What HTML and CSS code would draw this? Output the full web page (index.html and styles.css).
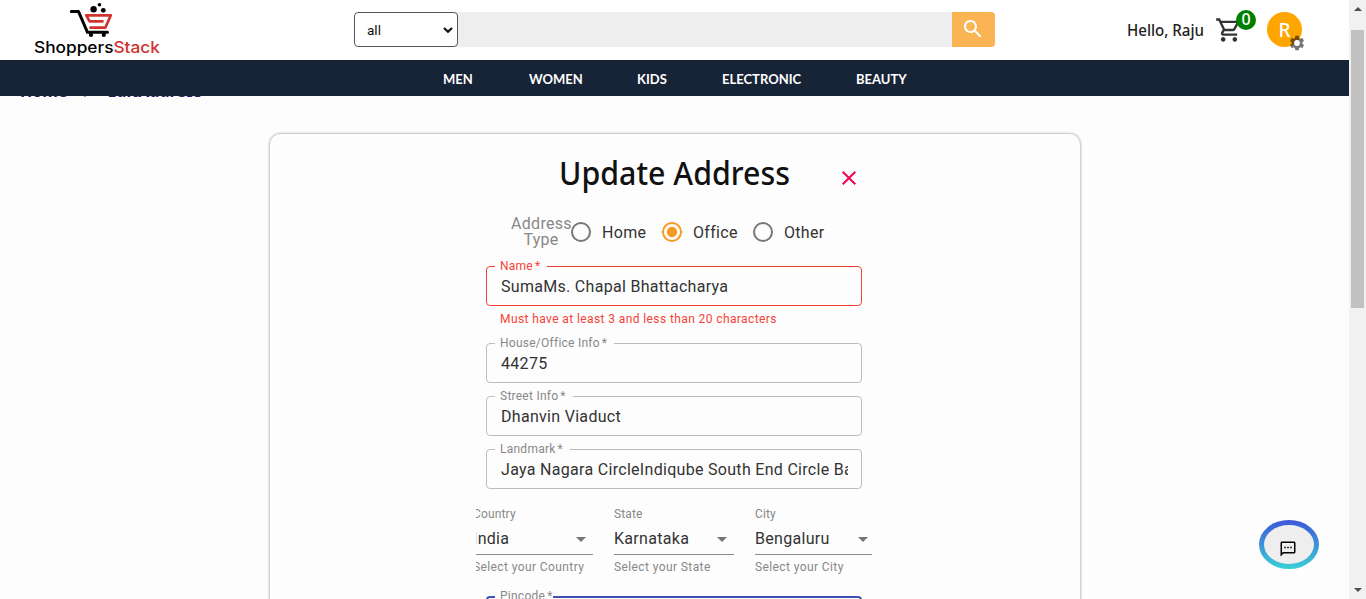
FILE: index.html
```html
<!DOCTYPE html>
<html lang="en">
<head>
<meta charset="utf-8">
<title>ShoppersStack</title>
<link rel="stylesheet" href="styles.css">
</head>
<body>
<div class="window">
  <div class="page">
    <header class="header">
      <svg class="logo" width="140" height="60" viewBox="0 0 140 60">
        <g fill="none" stroke="#000" stroke-width="3" stroke-linecap="round" stroke-linejoin="round">
          <path d="M47.300 11.500H54.500L63.500 32.300H83.500"/>
        </g>
        <g fill="none" stroke="#cf3430" stroke-width="2.700" stroke-linejoin="round" stroke-linecap="round">
          <path d="M78 21.300H65.600L62.300 15.300H86.800L81.300 27.700H66.500M67 21.300H78.500"/>
        </g>
        <circle cx="69.600" cy="9.300" r="3.200"/><circle cx="75.500" cy="4.800" r="1.800"/><circle cx="79.300" cy="10.300" r="2.400"/>
        <circle cx="67" cy="34.900" r="2.100"/><circle cx="79.800" cy="34.900" r="2.100"/>
        <text class="logo-text" x="10" y="52.500" textLength="126" lengthAdjust="spacingAndGlyphs">Shoppers<tspan fill="#cf3430">Stack</tspan></text>
      </svg>
      <div class="search">
        <div class="category">all
          <svg width="12" height="8" viewBox="0 0 12 8"><path d="M2 2L6 5.800L10 2" fill="none" stroke="#111" stroke-width="2.200"/></svg>
        </div>
        <div class="query"></div>
        <div class="search-button">
          <svg width="24" height="24" viewBox="0 0 24 24" fill="#fff"><path d="M15.500 14h-.79l-.28-.27C15.410 12.590 16 11.110 16 9.500 16 5.910 13.090 3 9.500 3S3 5.910 3 9.500 5.910 16 9.500 16c1.610 0 3.090-.59 4.230-1.570l.27.28v.79l5 4.990L20.490 19l-4.990-5zm-6 0C7.010 14 5 11.990 5 9.500S7.010 5 9.500 5 14 7.010 14 9.500 11.990 14 9.500 14z"/></svg>
        </div>
      </div>
      <div class="account">
        <svg class="hello" width="79" height="24"><text x="1" y="17" textLength="77" lengthAdjust="spacingAndGlyphs">Hello, Raju</text></svg>
        <div class="cart">
          <svg width="28" height="28" viewBox="0 0 24 24" fill="#333"><path d="M15.550 13c.75 0 1.410-.41 1.750-1.030l3.580-6.490c.37-.66-.11-1.480-.87-1.480H5.210l-.94-2H1v2h2l3.600 7.590-1.350 2.440C4.520 15.370 5.480 17 7 17h12v-2H7l1.100-2h7.450zM6.160 6h12.150l-2.760 5H8.530L6.160 6zM7 18c-1.100 0-1.990.9-1.990 2S5.900 22 7 22s2-.9 2-2-.9-2-2-2zm10 0c-1.100 0-1.990.9-1.990 2s.89 2 1.990 2 2-.9 2-2-.9-2-2-2z"/></svg>
          <span class="count">0</span>
        </div>
        <div class="avatar">R
          <svg class="gear" width="18" height="18" viewBox="0 0 24 24"><path d="M19.140 12.940c.04-.3.060-.61.060-.94 0-.32-.02-.64-.07-.94l2.030-1.580c.18-.14.23-.41.120-.61l-1.920-3.320c-.12-.22-.37-.29-.59-.22l-2.390.96c-.5-.38-1.030-.7-1.620-.94l-.36-2.540c-.04-.24-.24-.41-.48-.41h-3.840c-.24 0-.43.170-.47.410l-.36 2.540c-.59.240-1.130.570-1.620.940l-2.390-.96c-.22-.08-.47 0-.59.220L2.740 8.870c-.12.210-.08.470.120.610l2.030 1.580c-.05.300-.09.630-.09.940s.02.640.07.940l-2.030 1.580c-.18.140-.23.410-.12.610l1.920 3.320c.12.220.37.290.59.220l2.390-.96c.5.380 1.030.7 1.620.94l.36 2.540c.05.240.24.410.48.410h3.840c.24 0 .44-.17.47-.41l.36-2.540c.59-.24 1.130-.56 1.620-.94l2.390.96c.22.080.47 0 .59-.22l1.920-3.320c.12-.22.070-.47-.12-.61l-2.010-1.580z" /><circle cx="12" cy="12" r="3.900" /></svg>
        </div>
      </div>
    </header>
    <nav class="nav"><a>MEN</a><a>WOMEN</a><a>KIDS</a><a>ELECTRONIC</a><a>BEAUTY</a></nav>
    <main class="main">
      <div class="crumbs"><span>Home</span><i>/</i><span>EditAddress</span></div>
      <section class="card">
        <div class="heading">
          <svg class="title" width="236" height="48"><text x="1" y="35" textLength="231" lengthAdjust="spacingAndGlyphs">Update Address</text></svg>
          <svg class="close" width="24" height="24" viewBox="0 0 24 24"><path d="M19 6.410L17.590 5 12 10.590 6.410 5 5 6.410 10.590 12 5 17.590 6.410 19 12 13.410 17.590 19 19 17.590 13.410 12z" fill="#f50057"/></svg>
        </div>
        <div class="types">
          <span class="type-label">Address<br>Type</span>
          <span class="radio"><i class="dot"></i>Home</span>
          <span class="radio"><i class="dot on"></i>Office</span>
          <span class="radio"><i class="dot"></i>Other</span>
        </div>
        <div class="fields">
          <div class="field error"><label>Name<b>*</b></label><p>SumaMs. Chapal Bhattacharya</p></div>
          <div class="message">Must have at least 3 and less than 20 characters</div>
          <div class="field"><label>House/Office Info<b>*</b></label><p>44275</p></div>
          <div class="field"><label>Street Info<b>*</b></label><p>Dhanvin Viaduct</p></div>
          <div class="field"><label>Landmark<b>*</b></label><p>Jaya Nagara CircleIndiqube South End Circle Banashankari</p></div>
        </div>
        <div class="selects">
          <div class="select"><small>Country</small><div class="value">India<i></i></div><small class="hint">Select your Country</small></div>
          <div class="select"><small>State</small><div class="value">Karnataka<i></i></div><small class="hint">Select your State</small></div>
          <div class="select"><small>City</small><div class="value">Bengaluru<i></i></div><small class="hint">Select your City</small></div>
        </div>
        <div class="fields">
          <div class="field focused"><label>Pincode<b>*</b></label></div>
        </div>
      </section>
    </main>
    <div class="chat">
      <svg width="18" height="18" viewBox="0 0 24 24"><path d="M20 2H4c-1.100 0-2 .9-2 2v18l4-4h14c1.100 0 2-.9 2-2V4c0-1.100-.9-2-2-2zm0 14H5.200L4 17.200V4h16v12zM7 9h2v2H7zm4 0h2v2h-2zm4 0h2v2h-2z"/></svg>
    </div>
  </div>
  <div class="scrollbar"><i class="up"></i><div class="thumb"></div><i class="down"></i></div>
</div>
</body>
</html>
```
FILE: styles.css
```css
* { box-sizing: border-box; }
body { margin: 0; font-family: Roboto, sans-serif; }
.window { display: flex; width: 1366px; height: 599px; overflow: hidden; }
.page { width: 1349px; height: 599px; overflow: hidden; position: relative; background: #fdfdfd; }

.header { display: flex; height: 60px; background: #fff; position: relative; z-index: 2; }
.logo { margin-left: 24px; flex: none; }
.logo-text { font: 500 16px "Inter", sans-serif; }
.search { display: flex; width: 641px; height: 35px; margin: 12px 0 0 190px; flex: none; border-radius: 4px; background: #eee; overflow: hidden; }
.category { display: flex; align-items: center; justify-content: space-between; width: 104px; padding: 0 3px 0 12px; border: 1px solid #555; border-radius: 4px; background: #fff; font-size: 13.5px; color: #111; }
.query { flex: 1; }
.search-button { width: 43px; padding: 5px 0 0 9px; background: #fbb454; }
.account { display: flex; margin-left: 131px; }
.hello { margin-top: 19px; font: 500 16px "Noto Sans", sans-serif; fill: #222; }
.cart { position: relative; margin: 16px 0 0 10px; width: 28px; height: 28px; }
.count { position: absolute; left: 21px; top: -6px; width: 20px; height: 20px; border-radius: 50%; background: #008000; color: #fff; font: 500 16px/18px "Noto Sans", sans-serif; text-align: center; }
.avatar { position: relative; width: 35px; height: 35px; margin: 12px 0 0 24px; border-radius: 50%; background: #ffa500; color: #fff; font: 500 19px/36px "Noto Sans", sans-serif; text-align: center; }
.gear { position: absolute; left: 21px; top: 22px; }
.gear path { fill: #000; opacity: .54; }
.gear circle { fill: #fff; }

.nav { display: flex; height: 36px; padding: 1px 0 0 443px; gap: 57px; align-items: center; background: #172337; position: relative; z-index: 2; color: #fff; font: 700 13px "Lato", sans-serif; }
.nav a:nth-child(1) { width: 29px; }
.nav a:nth-child(2) { width: 51px; }
.nav a:nth-child(3) { width: 28px; }
.nav a:nth-child(4) { width: 77px; }

.main { margin-top: -17px; }
.crumbs { display: flex; height: 55px; padding: 1px 0 0 20px; color: #2a1463; font: 700 16px/22px "Noto Sans", sans-serif; }
.crumbs i { width: 40px; text-align: center; font-weight: 400; color: #777; }
.card { width: 810px; height: 600px; margin: 0 0 0 270px; border-radius: 10px; background: #fdfdfd; box-shadow: 0 0 3px rgba(0, 0, 0, .5); }
.heading { display: flex; height: 76px; padding: 16px 0 0 288px; }
.title { font: 500 32px "Noto Sans", sans-serif; fill: #111; }
.close { margin: 16px 0 0 43px; }

.types { display: flex; height: 56px; padding-left: 241px; color: #333; font-size: 16px; letter-spacing: .15px; }
.type-label { width: 60px; padding-top: 6px; line-height: 16px; color: #888; text-align: center; letter-spacing: .3px; }
.radio { display: flex; height: 44px; width: 91px; align-items: center; letter-spacing: .3px; }
.dot { width: 20px; height: 20px; margin-right: 11px; border: 2px solid #777; border-radius: 50%; }
.dot.on { border-color: #f8971d; background: radial-gradient(circle, #f8971d 4.700px, transparent 5.500px); }

.fields { width: 376px; margin-left: 216px; }
.field { position: relative; height: 40px; margin-bottom: 13px; padding: 0 13px 0 14px; border: 1px solid #bdbdbd; border-radius: 4px; }
.field p { margin: 0; line-height: 39px; font-size: 16px; letter-spacing: .3px; color: #333; overflow: hidden; white-space: nowrap; }
.field label { position: absolute; left: 8px; top: -8px; padding: 0 7px 0 5px; background: #fdfdfd; color: #888; font-size: 12px; line-height: 14px; letter-spacing: .25px; }
.field b { font-weight: 400; margin-left: 2px; }
.error { border-color: #f44336; margin-bottom: 6px; }
.error label, .message { color: #f44336; }
.message { height: 31px; padding-left: 14px; line-height: 14px; font-size: 12px; letter-spacing: .4px; }
.focused { border: 2px solid #3f51b5; }
.focused label { padding-right: 0; left: 7px; top: -9px; }

.selects { display: grid; grid-template-columns: 120px 120px 117px; column-gap: 21px; width: 396px; height: 94px; padding-top: 5px; margin-left: 206px; overflow: hidden; }
.select { margin-left: -3px; margin-right: 3px; width: 120px; color: #888; }
.select:nth-child(n+2) { margin-left: -3px; }
.select small { display: block; font-size: 12px; line-height: 14px; letter-spacing: .15px; }
.select .hint { margin-top: 5px; letter-spacing: .4px; }
.value { display: flex; align-items: center; justify-content: space-between; height: 34px; padding: 1px 7px 0 0; border-bottom: 1px solid #8c8c8c; color: #333; font-size: 16px; letter-spacing: .3px; }
.value i { border: 5px solid transparent; border-top-color: #757575; border-bottom: 0; margin-top: 2px; }

.chat { position: absolute; left: 1259px; top: 520px; width: 60px; height: 49px; padding: 15px 0 0 15px; border: 5px solid transparent; border-radius: 50%; background: linear-gradient(#eee, #eee) padding-box, linear-gradient(#3d56d8, #3bd0d6) border-box; }

.scrollbar { display: flex; flex-direction: column; align-items: center; width: 17px; height: 599px; padding: 7px 0; background: #f1f1f1; }
.thumb { width: 13px; height: 278px; margin: 19px 0 auto; background: #c1c1c1; }
.up, .down { border: 4px solid transparent; }
.up { border-top: 0; border-bottom-color: #505050; }
.down { border-bottom: 0; border-top-color: #505050; }
```
